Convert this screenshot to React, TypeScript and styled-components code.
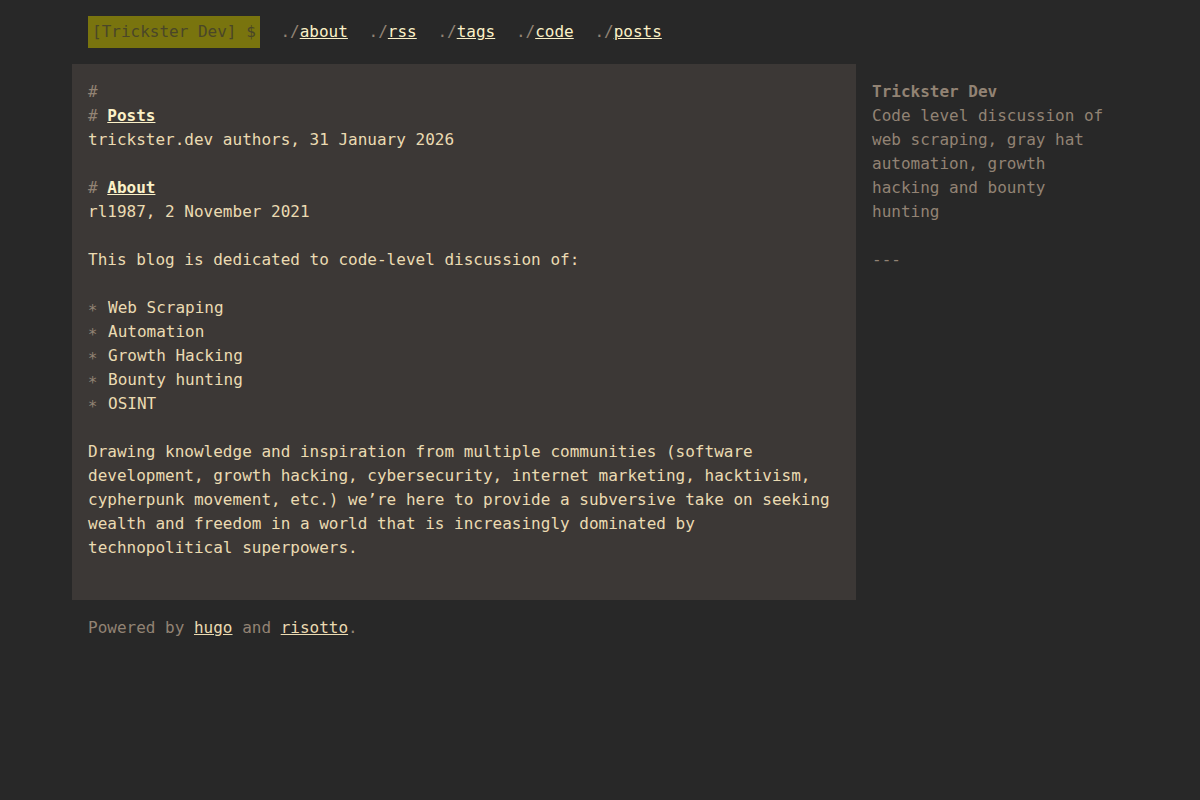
import React from "react";
import styled, { createGlobalStyle } from "styled-components";

const Global = createGlobalStyle`
  html, body { margin: 0; padding: 0; background: #282828; }
  body {
    font-family: "DejaVu Sans Mono", "Liberation Mono", monospace;
    font-size: 16px;
    line-height: 24px;
    color: #ebdbb2;
  }
  * { box-sizing: border-box; }
`;

const Page = styled.div`
  width: 1056px;
  margin: 0 auto;
  display: grid;
  grid-template-columns: 784px 272px;
  grid-template-areas: "header header" "body sidebar" "footer footer";
`;

const Header = styled.header`
  grid-area: header;
  padding: 16px;
  display: flex;
  align-items: center;
  height: 64px;
`;

const Logo = styled.a`
  background: #79740e;
  color: #4a4628;
  padding: 4px 4px;
  text-decoration: none;
  margin-right: 20.7px;
`;

const NavItem = styled.span`
  margin-right: 20.7px;
  color: #928374;
  a { color: #fbf1c7; text-decoration: underline; }
`;

const Main = styled.main`
  grid-area: body;
  background: #3c3836;
  padding: 16px 16px 16px;
`;

const Heading = styled.h1`
  font-size: 16px;
  line-height: 24px;
  margin: 0;
  font-weight: bold;
  &::before { content: "# "; color: #928374; font-weight: normal; }
  a { color: #fbf1c7; text-decoration: underline; }
`;

const Para = styled.p`
  margin: 0 0 24px;
`;

const Byline = styled.p`
  margin: 0 0 24px;
`;

const List = styled.ul`
  list-style: none;
  margin: 0 0 24px;
  padding: 0;
`;

const Item = styled.li`
  &::before {
    content: "∗";
    display: inline-block;
    width: 20px;
    color: #928374;
  }
`;

const Sidebar = styled.aside`
  grid-area: sidebar;
  padding: 16px;
  color: #928374;
`;

const SideTitle = styled.div`
  font-weight: bold;
  color: #928374;
`;

const SideText = styled.p`
  margin: 0 0 24px;
`;

const Footer = styled.footer`
  grid-area: footer;
  padding: 16px;
  color: #928374;
  a { color: #ebdbb2; text-decoration: underline; }
`;

const navs = ["about", "rss", "tags", "code", "posts"];

export default function App() {
  return (
    <>
      <Global />
      <Page>
        <Header>
          <Logo href="#">[Trickster Dev] $</Logo>
          {navs.map((n) => (
            <NavItem key={n}>
              ./<a href="#">{n}</a>
            </NavItem>
          ))}
        </Header>
        <Main>
          <Heading />
          <Heading>
            <a href="#">Posts</a>
          </Heading>
          <Byline>trickster.dev authors, 31 January 2026</Byline>
          <Heading>
            <a href="#">About</a>
          </Heading>
          <Byline>rl1987, 2 November 2021</Byline>
          <Para>This blog is dedicated to code-level discussion of:</Para>
          <List>
            <Item>Web Scraping</Item>
            <Item>Automation</Item>
            <Item>Growth Hacking</Item>
            <Item>Bounty hunting</Item>
            <Item>OSINT</Item>
          </List>
          <Para>
            Drawing knowledge and inspiration from multiple communities (software
            development, growth hacking, cybersecurity, internet marketing,
            hacktivism, cypherpunk movement, etc.) we’re here to provide a
            subversive take on seeking wealth and freedom in a world that is
            increasingly dominated by technopolitical superpowers.
          </Para>
        </Main>
        <Sidebar>
          <SideTitle>Trickster Dev</SideTitle>
          <SideText>
            Code level discussion of web scraping, gray hat automation, growth
            hacking and bounty hunting
          </SideText>
          <SideText>---</SideText>
        </Sidebar>
        <Footer>
          Powered by <a href="#">hugo</a> and <a href="#">risotto</a>.
        </Footer>
      </Page>
    </>
  );
}
